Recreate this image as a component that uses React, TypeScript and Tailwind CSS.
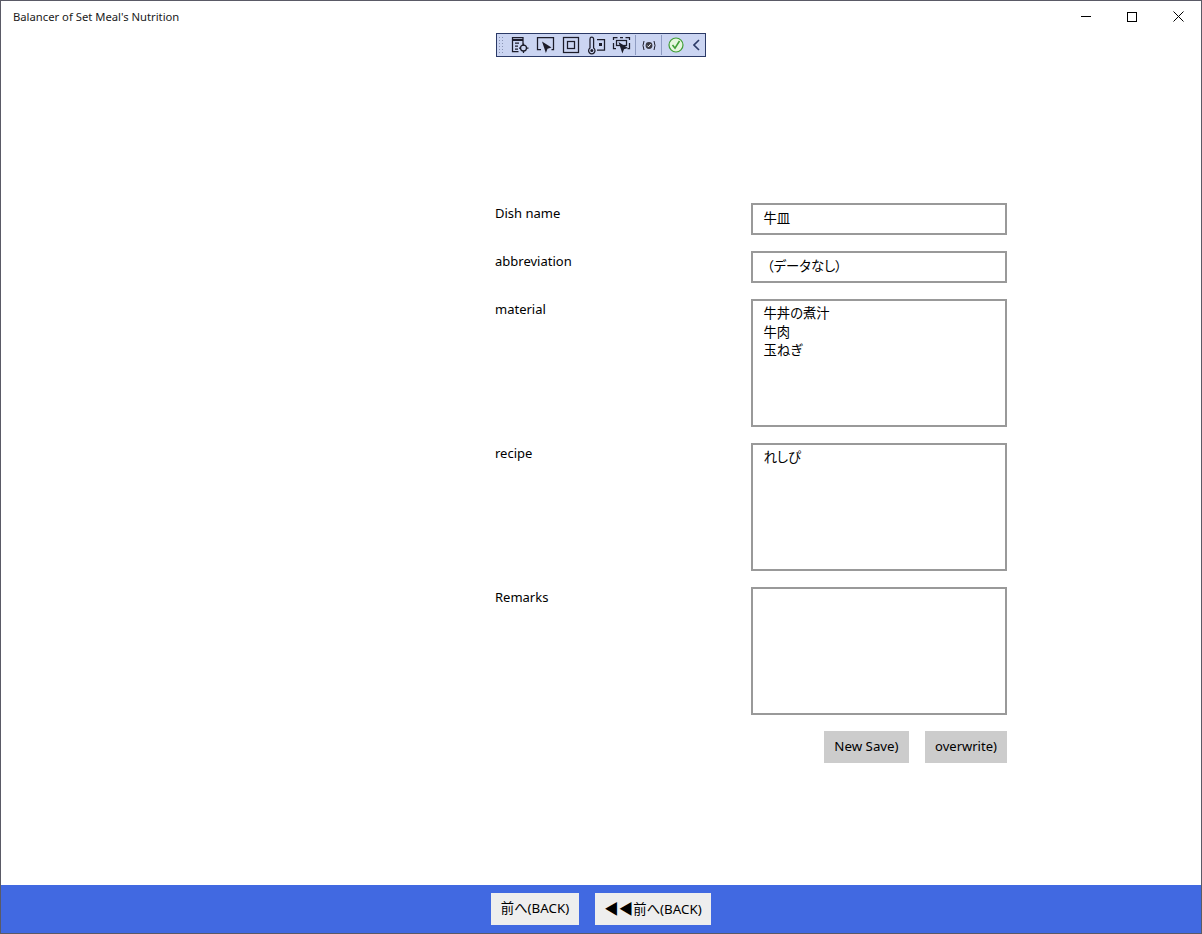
const font = "font-['Noto_Sans','Noto_Sans_CJK_JP',sans-serif]";

function Field({ label, value, tall }: { label: string; value: string; tall?: boolean }) {
  return (
    <div className="flex items-start">
      <div className="w-[256px] pt-[1px] text-[13px] leading-[18px] text-black">{label}</div>
      <div
        className={`w-[256px] border-2 border-[#999999] bg-white px-[10.5px] text-[13.33px] leading-[18.5px] text-black whitespace-pre-wrap [font-feature-settings:'palt'] ${tall ? "h-[128px] pt-[3px]" : "h-[32px] pt-[4px]"}`}
      >
        {value}
      </div>
    </div>
  );
}

function ToolIcon({ children, w = 17, ox = 0 }: { children: React.ReactNode; w?: number; ox?: number }) {
  return (
    <svg width={w} height="17" viewBox={`${ox} 0 ${w} 17`} fill="none" stroke="#1c1c2a" strokeWidth="1.25" className="shrink-0 overflow-visible">
      {children}
    </svg>
  );
}

function Toolbar() {
  return (
    <div className="absolute left-[495px] top-[32px] flex h-[24px] w-[210px] items-center border border-[#2b3a67] bg-[#cbd5f2]">
      <div className="ml-[1px] h-[18px] w-[7px] bg-[radial-gradient(#8a94b4_1px,transparent_1px)] bg-[length:3px_3px]" />
      <div className="ml-[8px] flex items-center gap-[8px]">
        <ToolIcon ox={1}>
          <path d="M11 9V.5H.5v14h6" />
          <path d="M.5 3h10.5" strokeWidth="2" />
          <path d="M3 6h4M3 9h3M3 12h3" />
          <circle cx="11.5" cy="11" r="3" />
          <path d="M11.5 6.5v2M11.5 13.5v2.5M7 11h2M14 11h2.5" />
        </ToolIcon>
        <ToolIcon ox={1}>
          <path d="M4 12.5H.5V.5h16v12h-2" />
          <path d="M5 4.5l9.5 6-4 1.2-1.6 4.3z" fill="#1c1c2a" stroke="none" />
        </ToolIcon>
        <ToolIcon>
          <rect x=".5" y=".5" width="15" height="15" />
          <rect x="4.5" y="4.5" width="7" height="7" />
        </ToolIcon>
        <ToolIcon>
          <path d="M2 2a1.8 1.8 0 0 1 3.6 0v9a3.2 3.2 0 1 1-3.6 0z" />
          <circle cx="3.8" cy="13.5" r="1.5" fill="#1c1c2a" stroke="none" />
          <path d="M9 2.5h7.5v10.5H9" />
          <rect x="11" y="6" width="3" height="3" fill="#1c1c2a" stroke="none" />
        </ToolIcon>
        <ToolIcon>
          <path d="M.5 3V.5h4M12.5.5h4V3M.5 6v5.5h2.5M16.5 6v5.5h-2M7 .5h3" />
          <rect x="3.5" y="3.5" width="10" height="5" />
          <path d="M5.5 5l9.5 6-4 1.2-1.6 4.3z" fill="#1c1c2a" stroke="none" />
        </ToolIcon>
      </div>
      <div className="ml-[5px] h-[20px] w-px bg-[#8f9cc2]" />
      <div className="ml-[6px]">
        <ToolIcon w={14}>
          <circle cx="7" cy="8.5" r="3.4" fill="#3a3a44" stroke="none" />
          <path d="M5.4 8.6l1.2 1.2 2-2.6" stroke="#fff" strokeWidth="1" />
          <path d="M2 4Q0 8.5 2 13M12 4Q14 8.5 12 13" strokeWidth="1" />
        </ToolIcon>
      </div>
      <div className="ml-[5px] h-[20px] w-px bg-[#8f9cc2]" />
      <div className="ml-[6px]">
        <svg width="16" height="16" viewBox="0 0 16 16" fill="none">
          <circle cx="8" cy="8" r="7" fill="#e6f6de" stroke="#3f9e36" strokeWidth="1.2" />
          <path d="M4.5 8l2.5 3.2L11.5 4" stroke="#3f9e36" strokeWidth="1.6" />
        </svg>
      </div>
      <svg width="7" height="12" viewBox="0 0 7 12" fill="none" className="ml-[9px]">
        <path d="M6 1L1 6l5 5" stroke="#2b3a67" strokeWidth="1.6" />
      </svg>
    </div>
  );
}

export default function App() {
  return (
    <div className={`relative flex h-[934px] w-[1202px] flex-col overflow-hidden border border-[#5a5a66] bg-white ${font}`}>
      <header className="flex h-[31px] shrink-0 items-start justify-between">
        <div className="pl-[12px] pt-[7px] text-[11.25px] leading-[17px] text-[#1a1a1a]">Balancer of Set Meal's Nutrition</div>
        <div className="flex">
          <div className="flex h-[31px] w-[46px] items-center justify-center">
            <div className="h-px w-[10px] bg-black" />
          </div>
          <div className="flex h-[31px] w-[46px] items-center justify-center">
            <div className="h-[10px] w-[10px] border border-black" />
          </div>
          <div className="flex h-[31px] w-[46px] items-center justify-center">
            <svg width="11" height="11" viewBox="0 0 11 11" stroke="black" strokeWidth="1">
              <path d="M.5.5l10 10M10.5.5l-10 10" />
            </svg>
          </div>
        </div>
      </header>

      <Toolbar />

      <main className="flex flex-1 flex-col pl-[494px] pt-[171px]">
        <div className="flex w-[512px] flex-col gap-[16px]">
          <Field label="Dish name" value="牛皿" />
          <Field label="abbreviation" value=" （データなし）" />
          <Field label="material" value={"牛丼の煮汁\n牛肉\n玉ねぎ"} tall />
          <Field label="recipe" value="れしぴ" tall />
          <Field label="Remarks" value="" tall />
          <div className="flex justify-end gap-[16px]">
            <button className="h-[32px] w-[85px] bg-[#cccccc] text-[13.3px] text-black">New Save)</button>
            <button className="h-[32px] w-[82px] bg-[#cccccc] text-[13px] text-black">overwrite)</button>
          </div>
        </div>
      </main>

      <footer className="flex h-[48px] shrink-0 items-center justify-center gap-[16px] bg-[#4169e1]">
        <button className="h-[32px] w-[88px] bg-[#eeeeee] text-[13.33px] text-black [font-feature-settings:'palt']">前へ(BACK)</button>
        <button className="h-[32px] w-[116px] bg-[#eeeeee] text-[13.33px] text-black [font-feature-settings:'palt']"><span className="text-[14.5px]">◀◀</span>前へ(BACK)</button>
      </footer>
    </div>
  );
}
